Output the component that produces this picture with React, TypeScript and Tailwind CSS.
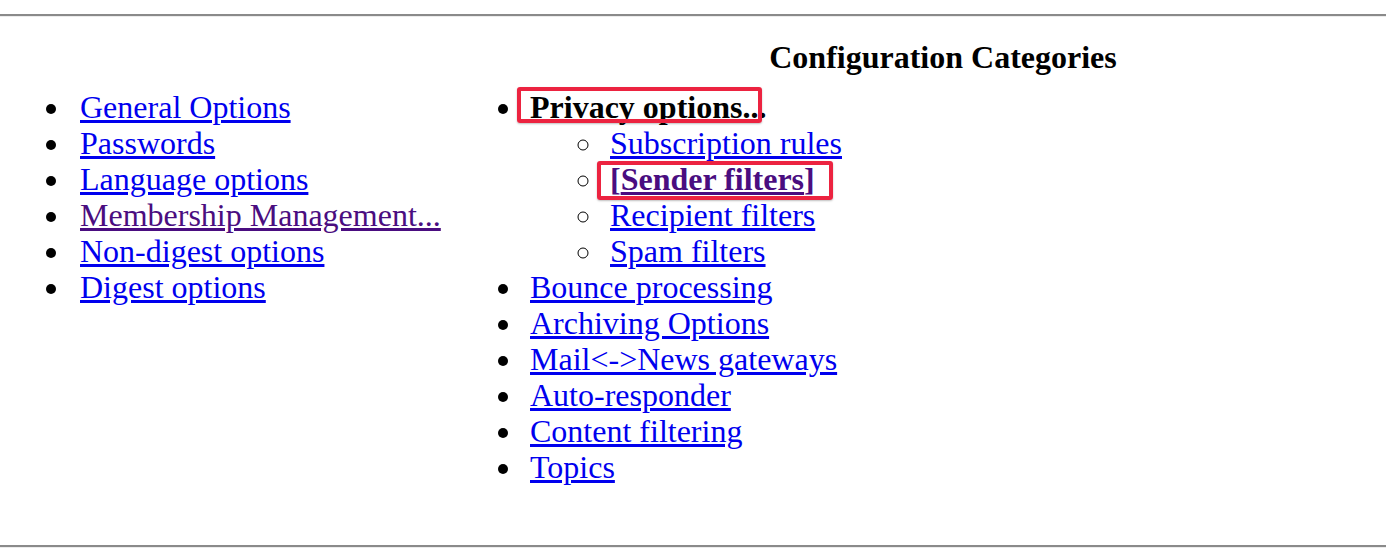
import React from "react";

const serif = { fontFamily: '"Liberation Serif", "Times New Roman", serif' };

function A({ children, visited }: { children: React.ReactNode; visited?: boolean }) {
  return (
    <a href="#" className={visited ? "text-[#4a0d80] underline" : "text-[#0000ee] underline"}>
      {children}
    </a>
  );
}

export default function App() {
  const left = [
    "General Options",
    "Passwords",
    "Language options",
    "Membership Management...",
    "Non-digest options",
    "Digest options",
  ];
  const right = [
    "Bounce processing",
    "Archiving Options",
    "Mail<->News gateways",
    "Auto-responder",
    "Content filtering",
    "Topics",
  ];
  return (
    <div className="w-[1386px] h-[556px] bg-white text-black overflow-hidden text-[32px] leading-[36px]" style={serif}>
      <div className="pt-[14px]">
        <div className="h-[2px] bg-[#8a8a8a]" />
        <div className="h-[1px] bg-[#ececec]" />
      </div>
      <div className="flex mt-[22px]">
        <div className="w-[500px] shrink-0" />
        <div className="flex-1 text-center font-bold">Configuration Categories</div>
      </div>
      <div className="flex mt-[14px] h-[456px]">
        <ul className="w-[450px] shrink-0 list-disc pl-[72px]">
          {left.map((t) => (
            <li key={t} className="pl-[8px]">
              <A visited={t === "Membership Management..."}>{t}</A>
            </li>
          ))}
        </ul>
        <ul className="flex-1 list-disc pl-[74px]">
          <li className="relative pl-[6px]">
            <b>Privacy options...</b>
            <div className="absolute left-[-7px] top-[-2px] w-[245px] h-[36px] border-[4px] border-[#ec2340] rounded-[3px] shadow-[0_1px_2px_rgba(0,0,0,0.25)]" />
            <ul className="list-[circle] pl-[74px]">
              <li className="pl-[6px]">
                <A>Subscription rules</A>
              </li>
              <li className="relative pl-[6px]">
                <b className="text-[#4a0d80]">
                  [<A visited>Sender filters</A>]
                </b>
                <div className="absolute left-[-7px] top-0 w-[236px] h-[39px] border-[4px] border-[#ec2340] rounded-[3px] shadow-[0_1px_2px_rgba(0,0,0,0.25)]" />
              </li>
              <li className="pl-[6px]">
                <A>Recipient filters</A>
              </li>
              <li className="pl-[6px]">
                <A>Spam filters</A>
              </li>
            </ul>
          </li>
          {right.map((t) => (
            <li key={t} className="pl-[6px]">
              <A>{t}</A>
            </li>
          ))}
        </ul>
      </div>
      <div>
        <div className="h-[2px] bg-[#8a8a8a]" />
        <div className="h-[1px] bg-[#ececec]" />
      </div>
    </div>
  );
}
